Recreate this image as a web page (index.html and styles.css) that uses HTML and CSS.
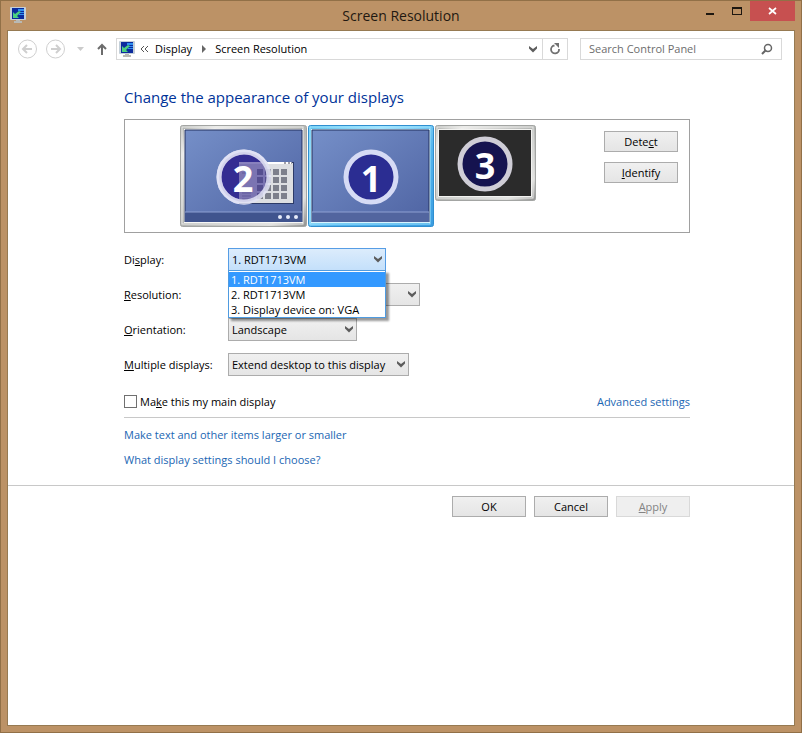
FILE: index.html
```html
<!DOCTYPE html>
<html lang="en">
<head>
    <meta charset="utf-8">
    <meta name="viewport" content="width=device-width, initial-scale=1">
    <title>Screen Resolution</title>
    <link rel="stylesheet" href="styles.css">
</head>
<body>
<!-- shared shapes -->
<svg class="defs" aria-hidden="true">
    <defs>
        <linearGradient id="desk" x1="0" y1="0" x2="1" y2="1">
            <stop offset="0" stop-color="#758fc8"/>
            <stop offset="1" stop-color="#4f64a3"/>
        </linearGradient>
        <linearGradient id="silver" x1="0" y1="0" x2="1" y2="1">
            <stop offset="0" stop-color="#a9aca9"/>
            <stop offset="0.15" stop-color="#eeeeec"/>
            <stop offset="0.5" stop-color="#b4b6b4"/>
            <stop offset="0.85" stop-color="#dededc"/>
            <stop offset="1" stop-color="#8f9090"/>
        </linearGradient>
        <linearGradient id="glow" x1="0" y1="0" x2="1" y2="1">
            <stop offset="0" stop-color="#5fc3ee"/>
            <stop offset="0.3" stop-color="#a5e2fb"/>
            <stop offset="0.6" stop-color="#55b6ee"/>
            <stop offset="1" stop-color="#3a9ce0"/>
        </linearGradient>
        <symbol id="screen" viewBox="0 0 16 16">
            <rect x="0" y="0" width="16" height="13" rx="1" fill="#c3cfd8"/>
            <rect x="2" y="1" width="12" height="11" fill="#0b2a9c"/>
            <path d="M8 2h6v2H8zM8 5h6v1H8zM9 7h5v1H9z" fill="#2f8ff0"/>
            <path d="M3 5v6h6L7 9l4-4-2-1-4 3z" fill="#4bd080"/>
            <path d="M6 13h4v1h2v2H4v-2h2z" fill="#b9b9b4"/>
        </symbol>
        <symbol id="chevron" viewBox="0 0 8 7">
            <path d="M0 0l4 3 4-3v2.500L4 6.500 0 2.500z" fill="#5c5c5c"/>
        </symbol>
    </defs>
</svg>

<div class="window">
    <header class="titlebar">
        <svg class="titlebar-icon" width="16" height="16"><use href="#screen"/></svg>
        <h1 class="titlebar-text">Screen Resolution</h1>
        <div class="titlebar-buttons">
            <button class="caption" aria-label="Minimize">
                <svg width="10" height="12"><path d="M1 8h8v2H1z" fill="#1d1710"/></svg>
            </button>
            <button class="caption" aria-label="Maximize">
                <svg width="10" height="12"><path d="M0 2h10v8H0zM1 4v5h8V4z" fill="#1d1710" fill-rule="evenodd"/></svg>
            </button>
            <button class="caption caption-close" aria-label="Close">
                <svg width="10" height="10"><path d="M1 2l7 6M8 2L1 8" stroke="#fff" stroke-width="1.700"/></svg>
            </button>
        </div>
    </header>

    <div class="client">
        <nav class="toolbar">
            <button class="nav-button" aria-label="Back">
                <svg width="19" height="20" fill="none" stroke="#cfcfcf">
                    <circle cx="9.500" cy="10" r="9"/>
                    <path d="M6 10h8M9 6l-4 4 4 4" stroke-width="2"/>
                </svg>
            </button>
            <button class="nav-button" aria-label="Forward">
                <svg width="19" height="20" fill="none" stroke="#cfcfcf">
                    <circle cx="9.500" cy="10" r="9"/>
                    <path d="M5 10h8M10 6l4 4-4 4" stroke-width="2"/>
                </svg>
            </button>
            <button class="nav-button" aria-label="Recent locations">
                <svg width="7" height="4"><path d="M0 0h7L3.500 4z" fill="#cbcbcb"/></svg>
            </button>
            <button class="nav-button" aria-label="Up">
                <svg width="10" height="12" fill="none" stroke="#6c6c6c" stroke-width="2"><path d="M5 12V2M1 6l4-4 4 4"/></svg>
            </button>
            <div class="address">
                <svg width="16" height="16"><use href="#screen"/></svg>
                <svg class="crumb-more" width="8" height="8" fill="none" stroke="#555"><path d="M4 1L1 4l3 3M8 1L5 4l3 3"/></svg>
                <a class="crumb" href="#">Display</a>
                <svg class="crumb-arrow" width="4" height="8"><path d="M0 0l4 4-4 4z" fill="#666"/></svg>
                <a class="crumb" href="#">Screen Resolution</a>
                <button class="address-drop" aria-label="Previous locations">
                    <svg width="8" height="7"><use href="#chevron"/></svg>
                </button>
                <button class="address-refresh" aria-label="Refresh">
                    <svg width="12" height="12" fill="none" stroke="#707070"><path d="M5.500 2.500a4 4 0 1 0 4.500 3.500" stroke-width="1.800"/><path d="M5 0h5v5z" fill="#707070" stroke="none"/></svg>
                </button>
            </div>
            <form class="search">
                <input class="search-input" type="search" aria-label="Search Control Panel" placeholder="Search Control Panel">
                <svg width="12" height="12" fill="none" stroke="#666"><circle cx="7" cy="5" r="3.500" stroke-width="1.500"/><path d="M5 7l-4 4" stroke-width="2"/></svg>
            </form>
        </nav>

        <main class="main">
            <h2 class="heading">Change the appearance of your displays</h2>

            <section class="preview">
                <div class="monitors">
                    <svg width="127" height="102">
                        <rect x="0.500" y="0.500" width="126" height="101" rx="2" fill="url(#silver)" stroke="#a3a5a3"/>
                        <rect x="2" y="2" width="121" height="97" fill="none" stroke="#e9eae8"/>
                        <rect x="4" y="4" width="119" height="94" fill="#f7f7f6"/>
                        <rect x="5" y="5" width="117" height="92" fill="url(#desk)"/>
                        <path d="M5 97V5h117v92" fill="none" stroke="#22315e"/>
                        <rect x="5" y="87" width="117" height="10" fill="#40548e"/>
                        <path d="M5 87h117" stroke="#8ea0d2"/>
                        <g fill="#e6ebfa"><circle cx="100" cy="92" r="2"/><circle cx="108" cy="92" r="2"/><circle cx="116" cy="92" r="2"/></g>
                        <circle cx="64" cy="52" r="25" fill="#2b2d92" stroke="#d6dbf5" stroke-width="5"/>
                        <rect x="59" y="37" width="55" height="42" fill="#2d3b68"/>
                        <rect x="59" y="38" width="54" height="40" fill="#dddfe2"/>
                        <path d="M59 38h53" stroke="#fff" stroke-width="2"/>
                        <path d="M104 38h2M108 38h2M111 38h1" stroke="#445"/>
                        <g stroke="#7d808c" stroke-width="6" stroke-dasharray="6 2">
                            <path d="M77 47h30M77 55h30M77 63h30M77 71h30"/>
                        </g>
                        <path d="M62 45h9M62 48h9M62 68h9M62 71h9M62 74h9" stroke="#9a9ca8"/>
                        <circle cx="64" cy="52" r="25" fill="#3a2d92" fill-opacity="0.600" stroke="#e2e3f5" stroke-opacity="0.850" stroke-width="5"/>
                        <text class="monitor-number" x="63" y="67">2</text>
                    </svg>
                    <svg width="126" height="102">
                        <rect x="0.500" y="0.500" width="125" height="101" rx="2" fill="url(#glow)" stroke="#2f8fd0"/>
                        <rect x="2" y="2" width="120" height="97" fill="none" stroke="#9ee6ff"/>
                        <rect x="3" y="4" width="119" height="94" fill="#d8f4ff"/>
                        <rect x="4" y="5" width="117" height="92" fill="url(#desk)"/>
                        <path d="M4 97V5h117v92" fill="none" stroke="#22315e"/>
                        <rect x="4" y="87" width="117" height="10" fill="#52659f"/>
                        <path d="M4 87h117" stroke="#8ea0d2"/>
                        <circle cx="63" cy="52" r="25" fill="#2b2d92" stroke="#d6dbf5" stroke-width="5"/>
                        <text class="monitor-number" x="63" y="67">1</text>
                    </svg>
                    <svg width="101" height="76">
                        <rect x="0.500" y="0.500" width="100" height="75" rx="2" fill="url(#silver)" stroke="#a3a5a3"/>
                        <rect x="2" y="2" width="96" height="71" fill="none" stroke="#e9eae8"/>
                        <rect x="3" y="4" width="94" height="68" fill="#f2f2f0"/>
                        <rect x="4" y="5" width="92" height="66" fill="#2b2b2b"/>
                        <circle cx="50" cy="39" r="25" fill="#15134f" stroke="#cfcdd6" stroke-width="5"/>
                        <text class="monitor-number" x="50" y="54">3</text>
                    </svg>
                </div>
                <div class="preview-buttons">
                    <button class="button">Dete<u>c</u>t</button>
                    <button class="button"><u>I</u>dentify</button>
                </div>
            </section>

            <form class="settings">
                <label for="display">Di<u>s</u>play:</label>
                <div class="combo combo-display combo-open">
                    <select id="display">
                        <option>1. RDT1713VM</option>
                    </select>
                    <svg class="combo-arrow" width="8" height="7"><use href="#chevron"/></svg>
                    <ul class="combo-list" role="listbox" aria-label="Display">
                        <li role="option" aria-selected="true">1. RDT1713VM</li>
                        <li role="option">2. RDT1713VM</li>
                        <li role="option">3. Display device on: VGA</li>
                    </ul>
                </div>

                <label for="resolution"><u>R</u>esolution:</label>
                <div class="combo combo-resolution">
                    <select id="resolution">
                        <option>1280 × 1024</option>
                    </select>
                    <svg class="combo-arrow" width="8" height="7"><use href="#chevron"/></svg>
                </div>

                <label for="orientation"><u>O</u>rientation:</label>
                <div class="combo combo-orientation">
                    <select id="orientation">
                        <option>Landscape</option>
                    </select>
                    <svg class="combo-arrow" width="8" height="7"><use href="#chevron"/></svg>
                </div>

                <label for="multiple"><u>M</u>ultiple displays:</label>
                <div class="combo combo-multiple">
                    <select id="multiple">
                        <option>Extend desktop to this display</option>
                    </select>
                    <svg class="combo-arrow" width="8" height="7"><use href="#chevron"/></svg>
                </div>
            </form>

            <div class="main-display">
                <input id="main-display" type="checkbox">
                <label for="main-display">Ma<u>k</u>e this my main display</label>
                <a class="link advanced" href="#">Advanced settings</a>
            </div>

            <div class="links">
                <a class="link" href="#">Make text and other items larger or smaller</a>
                <a class="link" href="#">What display settings should I choose?</a>
            </div>
        </main>

        <footer class="footer">
            <button class="button">OK</button>
            <button class="button">Cancel</button>
            <button class="button" disabled><u>A</u>pply</button>
        </footer>
    </div>
</div>
</body>
</html>
```
FILE: styles.css
```css
* {
    box-sizing: border-box;
}

body {
    margin: 0;
    font-family: "Open Sans", "Noto Sans", sans-serif;
    font-size: 11px;
    line-height: 15px;
    color: #000;
}

button, input, select {
    font: inherit;
    color: inherit;
    margin: 0;
}

svg {
    display: block;
    flex: none;
}

.defs {
    position: absolute;
    width: 0;
    height: 0;
}

/* window frame */
.window {
    display: flex;
    flex-direction: column;
    min-height: 100vh;
    padding: 0 6px 6px;
    background: #bc9266;
    border: 1px solid #917047;
}

.titlebar {
    display: grid;
    grid-template-columns: 1fr auto 1fr;
    align-items: start;
    height: 29px;
}

.titlebar-icon {
    margin: 6px 0 0 3px;
}

.titlebar-text {
    margin: 0;
    font-size: 14px;
    font-weight: 400;
    line-height: 29px;
    color: #1f1811;
}

.titlebar-buttons {
    display: flex;
    justify-content: flex-end;
}

.caption {
    display: flex;
    align-items: center;
    justify-content: center;
    width: 27px;
    height: 20px;
    padding: 0;
    border: 0;
    background: none;
}

.caption-close {
    width: 45px;
    background: #c75050;
}

.client {
    flex: 1;
    background: #fff;
    border: 1px solid #967a52;
}

/* toolbar */
.toolbar {
    display: flex;
    align-items: center;
    padding: 7px 12px 0 10px;
}

.nav-button {
    display: flex;
    padding: 0;
    margin-right: 9px;
    border: 0;
    background: none;
}

.nav-button:nth-child(3) {
    margin: 0 13px 0 3px;
}

.address {
    display: flex;
    flex: 1;
    align-items: center;
    height: 22px;
    padding-left: 2px;
    border: 1px solid #d9d9d9;
}

.crumb {
    line-height: 13px;
    padding-bottom: 2px;
    color: #000;
    text-decoration: none;
}

.crumb-more {
    margin: 0 7px 0 5px;
}

.crumb-arrow {
    margin: 0 9px 0 10px;
}

.address-drop, .address-refresh {
    display: flex;
    align-items: center;
    justify-content: center;
    height: 20px;
    padding: 0;
    border: 0;
    background: none;
}

.address-drop {
    width: 18px;
    margin-left: auto;
}

.address-refresh {
    width: 25px;
    border-left: 1px solid #d9d9d9;
}

.search {
    display: flex;
    align-items: center;
    width: 202px;
    height: 22px;
    margin-left: 12px;
    padding: 0 8px;
    border: 1px solid #d9d9d9;
}

.search-input {
    flex: 1;
    min-width: 0;
    padding: 0 0 2px;
    border: 0;
    outline: 0;
    background: none;
}

.search-input::placeholder {
    color: #6d6d6d;
}

/* page */
.main {
    margin: 0 104px 0 116px;
}

.heading {
    margin: 27px 0 12px;
    font-size: 15px;
    font-weight: 400;
    line-height: 20px;
    color: #003399;
}

.preview {
    display: flex;
    justify-content: space-between;
    height: 114px;
    padding: 5px 11px 0 55px;
    border: 1px solid #a0a0a0;
}

.monitors {
    display: flex;
    align-items: flex-start;
    gap: 1px;
}

.monitor-number {
    font-size: 36px;
    font-weight: 700;
    fill: #fff;
    text-anchor: middle;
}

.preview-buttons {
    display: flex;
    flex-direction: column;
    gap: 10px;
    padding-top: 6px;
}

.button {
    width: 74px;
    height: 21px;
    padding: 0;
    border: 1px solid #acacac;
    background: linear-gradient(#f0f0f0, #e5e5e5);
}

.button:disabled {
    color: #838383;
    border-color: #d9d9d9;
    background: #efefef;
}

.settings {
    display: grid;
    grid-template-columns: 104px 1fr;
    align-items: center;
    row-gap: 12px;
    margin-top: 15px;
}

.combo {
    position: relative;
}

.combo select {
    display: block;
    width: 100%;
    height: 23px;
    padding: 0 3px;
    border: 1px solid #acacac;
    border-radius: 0;
    background: linear-gradient(#f0f0f0, #e5e5e5);
    appearance: none;
}

.combo-open select {
    border-color: #569de5;
    background: linear-gradient(#dcecfc, #c4e0fb);
}

.combo-display {
    width: 158px;
}

.combo-resolution {
    width: 192px;
}

.combo-orientation {
    width: 129px;
}

.combo-multiple {
    width: 181px;
}

.combo-arrow {
    position: absolute;
    top: 8px;
    right: 4px;
    pointer-events: none;
}

.combo-list {
    position: absolute;
    z-index: 1;
    top: 22px;
    left: 0;
    width: 100%;
    margin: 0;
    padding: 1px 0 0;
    list-style: none;
    background: #fff;
    border: 1px solid #4f9be0;
    box-shadow: 3px 3px 2px rgba(0, 0, 0, 0.4);
}

.combo-list li {
    padding: 0 2px;
    white-space: nowrap;
}

.combo-list li[aria-selected="true"] {
    color: #fff;
    background: #3399ff;
}

.main-display {
    display: flex;
    align-items: center;
    margin-top: 18px;
    padding-bottom: 8px;
    border-bottom: 1px solid #c8c8c8;
}

.main-display input {
    width: 13px;
    height: 13px;
    margin-right: 3px;
    border: 1px solid #707070;
    background: #fff;
    appearance: none;
}

.advanced {
    margin-left: auto;
}

.link {
    color: #1a66b3;
    text-decoration: none;
}

.links {
    display: flex;
    flex-direction: column;
    align-items: flex-start;
    gap: 10px;
    padding: 9px 0 18px;
}

.footer {
    display: flex;
    justify-content: flex-end;
    gap: 8px;
    padding: 10px 104px;
    border-top: 1px solid #c8c8c8;
}
```
